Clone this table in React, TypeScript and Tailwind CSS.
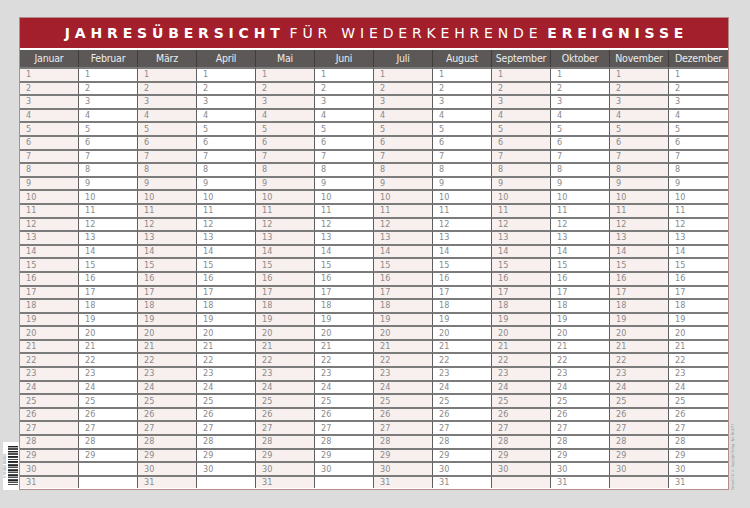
import React from "react";

const months = [
  ["Januar", 31],
  ["Februar", 29],
  ["März", 31],
  ["April", 30],
  ["Mai", 31],
  ["Juni", 30],
  ["Juli", 31],
  ["August", 31],
  ["September", 30],
  ["Oktober", 31],
  ["November", 30],
  ["Dezember", 31],
] as const;

const days = Array.from({ length: 31 }, (_, i) => i + 1);

const narrow = { fontFamily: '"Liberation Sans Narrow", "DejaVu Sans Condensed", "Liberation Sans", sans-serif' };

const Barcode = () => (
  <div className="w-[16px] h-[48px] bg-white flex items-center justify-center gap-[1px] px-[1px]">
    <div className="text-[3px] leading-none text-gray-500 [writing-mode:vertical-rl] rotate-180">9 783000 000000</div>
    <svg width="10" height="40" viewBox="0 0 10 40">
      {[0, 2, 3, 5, 7, 8, 10, 11, 13, 15, 16, 18, 19, 21, 23, 24, 26, 28, 29, 31, 33, 34, 36, 38].map((y, i) => (
        <rect key={y} x={0} y={y} width={10} height={i % 3 === 0 ? 1.4 : 0.8} fill="#222" />
      ))}
    </svg>
  </div>
);

export default function App() {
  return (
    <div className="w-[750px] h-[508px] bg-[#dcdcdc] flex pt-[17px] overflow-hidden">
      {/* left side with barcode */}
      <div className="w-[19px] shrink-0 flex flex-col justify-start pt-[425px] pl-[3px]">
        <Barcode />
      </div>

      {/* poster */}
      <div className="w-[710px] shrink-0 h-[473px] bg-white border border-[#b48c89] flex flex-col overflow-hidden">
        <div className="h-[30px] shrink-0 bg-[#a31f2c] flex items-center justify-center text-white text-[14px] tracking-[0.345em] pl-[5px]" style={{ fontFamily: '"DejaVu Sans", "Liberation Sans", sans-serif' }}>
          <span className="font-bold">JAHRESÜBERSICHT</span>
          <span className="ml-[0.35em] font-normal">FÜR WIEDERKEHRENDE</span>
          <span className="ml-[0.35em] font-bold">EREIGNISSE</span>
        </div>
        <div className="h-[2px] shrink-0 bg-white" />
        <div className="h-[17px] shrink-0 bg-[#5b5857] grid grid-cols-12" style={narrow}>
          {months.map(([name], i) => (
            <div
              key={name}
              className={`flex items-center justify-center text-[10.5px] tracking-[-0.02em] leading-none text-[#ececec] ${i < 11 ? "border-r border-[#3f3d3c]" : ""}`}
            >
              {name}
            </div>
          ))}
        </div>
        <div className="grid grid-cols-12 grid-rows-[repeat(31,13.6px)]" style={narrow}>
          {days.map((d) =>
            months.map(([name, len], i) => (
              <div
                key={name + d}
                className={`flex items-center overflow-hidden pl-[6px] text-[9px] leading-none text-[#8a8a8a] border-t-2 border-t-[#7c7b7b] ${
                  i < 11 ? "border-r border-r-[#5e5e5e]" : ""
                } ${i % 2 === 0 ? "bg-[#f8f0ef]" : "bg-white"}`}
              >
                {d <= len ? d : ""}
              </div>
            ))
          )}
        </div>
      </div>

      {/* right side small print */}
      <div className="w-[21px] shrink-0 flex flex-col justify-end pb-[18px]">
        <div className="ml-[2px] w-[4px] h-[76px] overflow-hidden flex justify-start">
          <span className="text-[3px] leading-[4px] text-[#8c8c8c] [writing-mode:vertical-rl] rotate-180 whitespace-nowrap">
            Version 1.0 · © Copyright Verlag · Art.-Nr. 4711
          </span>
        </div>
      </div>
    </div>
  );
}
